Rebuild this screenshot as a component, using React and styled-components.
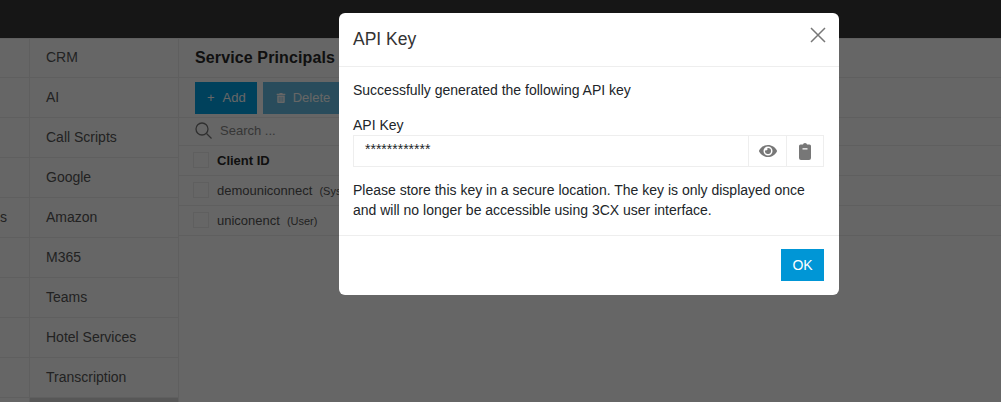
import React from 'react'
import styled, { createGlobalStyle } from 'styled-components'
import { FaEye, FaTrashAlt } from 'react-icons/fa'

const GlobalStyle = createGlobalStyle`
  html, body {
    margin: 0;
    height: 100%;
    overflow: hidden;
    background: #fff;
    font-family: "Liberation Sans", Arial, sans-serif;
    font-size: 14px;
    color: #333;
  }
  * { box-sizing: border-box; }
`

const Page = styled.div`
  position: relative;
  width: 1001px;
  height: 402px;
  overflow: hidden;
`

const TopBar = styled.header`
  height: 38px;
  background: #373737;
`

const Content = styled.div`
  display: flex;
  height: 364px;
  border-top: 1px solid #f0f0f0;
`

const SideColumn = styled.div`
  flex: none;
  width: ${({ $width }) => $width}px;
  border-right: 1px solid #eee;
`

const NavItem = styled.div`
  display: flex;
  align-items: center;
  height: 40px;
  padding-left: ${({ $indent }) => $indent}px;
  padding-bottom: 1px;
  margin-top: ${({ $first }) => ($first ? '-1px' : 0)};
  border-bottom: 1px solid #eee;
  background: ${({ $active }) => ($active ? '#d9d9d9' : 'transparent')};
  color: #555;
  white-space: nowrap;
  overflow: hidden;
`

const Main = styled.main`
  flex: 1;
  min-width: 0;
`

const TitleRow = styled.div`
  display: flex;
  align-items: center;
  height: 39px;
  padding-left: 16px;
  border-bottom: 1px solid #eee;
`

const Title = styled.h2`
  margin: 0;
  font-size: 16px;
  font-weight: 700;
  letter-spacing: 0.12px;
  color: #2a2a2a;
`

const Toolbar = styled.div`
  display: flex;
  align-items: center;
  gap: 6px;
  height: 40px;
  padding-left: 16px;
  border-bottom: 1px solid #eee;
`

const ToolButton = styled.div`
  display: flex;
  align-items: center;
  gap: ${({ $muted }) => ($muted ? 7 : 8)}px;
  height: 32px;
  padding: ${({ $muted }) => ($muted ? '0 11px 0 13px' : '0 11px 0 12px')};
  font-size: 13px;
  color: #fff;
  background: ${({ $muted }) => ($muted ? '#66bfe6' : '#00a2e6')};
  svg { display: block; }
`

const SearchRow = styled.div`
  display: flex;
  align-items: center;
  gap: 8px;
  height: 28px;
  padding: 0 0 2px 16px;
  border-bottom: 1px solid #eee;
  font-size: 13px;
  color: #888;
`

const TableRow = styled.div`
  display: flex;
  align-items: center;
  height: 30px;
  padding: 0 0 1px 14px;
  border-bottom: 1px solid #eee;
  font-size: 13px;
  color: #555;
`

const Check = styled.span`
  flex: none;
  width: 16px;
  height: 16px;
  margin-right: 8px;
  border: 1px solid #eee;
`

const HeadCell = styled.span`
  font-weight: 700;
  color: #2a2a2a;
`

const ClientCell = styled.span`
  width: 146px;
  white-space: nowrap;
  overflow: hidden;
`

const Kind = styled.span`
  margin-left: 7px;
  font-size: 11px;
`

const Backdrop = styled.div`
  position: absolute;
  inset: 0;
  background: rgba(0, 0, 0, 0.6);
`

const Modal = styled.div`
  position: absolute;
  left: 339px;
  top: 13px;
  width: 500px;
  height: 282px;
  display: flex;
  flex-direction: column;
  background: #fff;
  border-radius: 6px;
  color: #212529;
`

const ModalHeader = styled.div`
  display: flex;
  align-items: center;
  justify-content: space-between;
  height: 54px;
  padding: 0 13px 0 14px;
  border-bottom: 1px solid #eee;
`

const ModalTitle = styled.h3`
  margin: 0;
  font-size: 17.5px;
  font-weight: 400;
  color: #333;
`

const CloseIcon = styled.svg`
  display: block;
  align-self: flex-start;
  margin-top: 14px;
  width: 16px;
  height: 16px;
  stroke: #777;
  stroke-width: 1.5;
`

const ModalBody = styled.div`
  flex: 1;
  padding: 13px 15px 0 14px;
  border-bottom: 1px solid #eee;
`

const Text = styled.p`
  margin: 0;
  line-height: 20px;
`

const Label = styled.label`
  display: block;
  margin-top: 15px;
  line-height: 20px;
`

const KeyField = styled.div`
  display: flex;
  height: 32px;
  margin-bottom: 13px;
  border: 1px solid #eee;
`

const KeyValue = styled.div`
  flex: 1;
  padding: 4px 11px;
  font-size: 14px;
  line-height: 18px;
`

const FieldButton = styled.div`
  flex: none;
  display: flex;
  align-items: center;
  justify-content: center;
  width: ${({ $width }) => $width}px;
  border-left: 1px solid #eee;
  color: #777;
`

const ModalFooter = styled.div`
  display: flex;
  justify-content: flex-end;
  height: 59px;
  padding: 13px 15px 0 0;
`

const OkButton = styled.button`
  width: 43px;
  height: 32px;
  padding: 0;
  border: 0;
  background: #0096d6;
  color: #fff;
  font: 14px "Liberation Sans", Arial, sans-serif;
`

const leftRows = ['', '', '', '', 's', '', '', '', '', '']
const navRows = ['CRM', 'AI', 'Call Scripts', 'Google', 'Amazon', 'M365', 'Teams', 'Hotel Services', 'Transcription', '']

export default function App() {
  return (
    <Page>
      <GlobalStyle />
      <TopBar />
      <Content>
        <SideColumn $width={30}>
          {leftRows.map((text, i) => (
            <NavItem key={i} $first={i === 0}>{text}</NavItem>
          ))}
        </SideColumn>
        <SideColumn $width={149}>
          {navRows.map((text, i) => (
            <NavItem key={i} $first={i === 0} $indent={16} $active={i === 9}>{text}</NavItem>
          ))}
        </SideColumn>
        <Main>
          <TitleRow><Title>Service Principals</Title></TitleRow>
          <Toolbar>
            <ToolButton><span>+</span>Add</ToolButton>
            <ToolButton $muted><FaTrashAlt size={10} />Delete</ToolButton>
          </Toolbar>
          <SearchRow>
            <svg width="17" height="17" viewBox="0 0 17 17" fill="none" stroke="#777" strokeWidth="1.3">
              <circle cx="7" cy="7" r="6" />
              <path d="M11.5 11.5 16.5 16.5" />
            </svg>
            Search ...
          </SearchRow>
          <TableRow><Check /><HeadCell>Client ID</HeadCell></TableRow>
          <TableRow><Check /><ClientCell>demouniconnect<Kind>(System)</Kind></ClientCell></TableRow>
          <TableRow><Check /><ClientCell>uniconenct<Kind>(User)</Kind></ClientCell></TableRow>
        </Main>
      </Content>
      <Backdrop />
      <Modal>
        <ModalHeader>
          <ModalTitle>API Key</ModalTitle>
          <CloseIcon viewBox="0 0 16 16"><path d="M1 1 15 15M15 1 1 15" /></CloseIcon>
        </ModalHeader>
        <ModalBody>
          <Text>Successfully generated the following API key</Text>
          <Label>API Key</Label>
          <KeyField>
            <KeyValue>************</KeyValue>
            <FieldButton $width={38}><FaEye size={18} /></FieldButton>
            <FieldButton $width={37}>
              <svg width="14" height="17" viewBox="0 0 14 17">
                <path fill="#777" fillRule="evenodd" d="M5 1.6a2 1.6 0 0 1 4 0H11.5A1.5 1.5 0 0 1 13 3.1V15a2 2 0 0 1-2 2H3a2 2 0 0 1-2-2V3.1A1.5 1.5 0 0 1 2.5 1.6ZM4.5 5.2v1.2h5V5.2Z" />
              </svg>
            </FieldButton>
          </KeyField>
          <Text>Please store this key in a secure location. The key is only displayed once and will no longer be accessible using 3CX user interface.</Text>
        </ModalBody>
        <ModalFooter><OkButton>OK</OkButton></ModalFooter>
      </Modal>
    </Page>
  )
}
